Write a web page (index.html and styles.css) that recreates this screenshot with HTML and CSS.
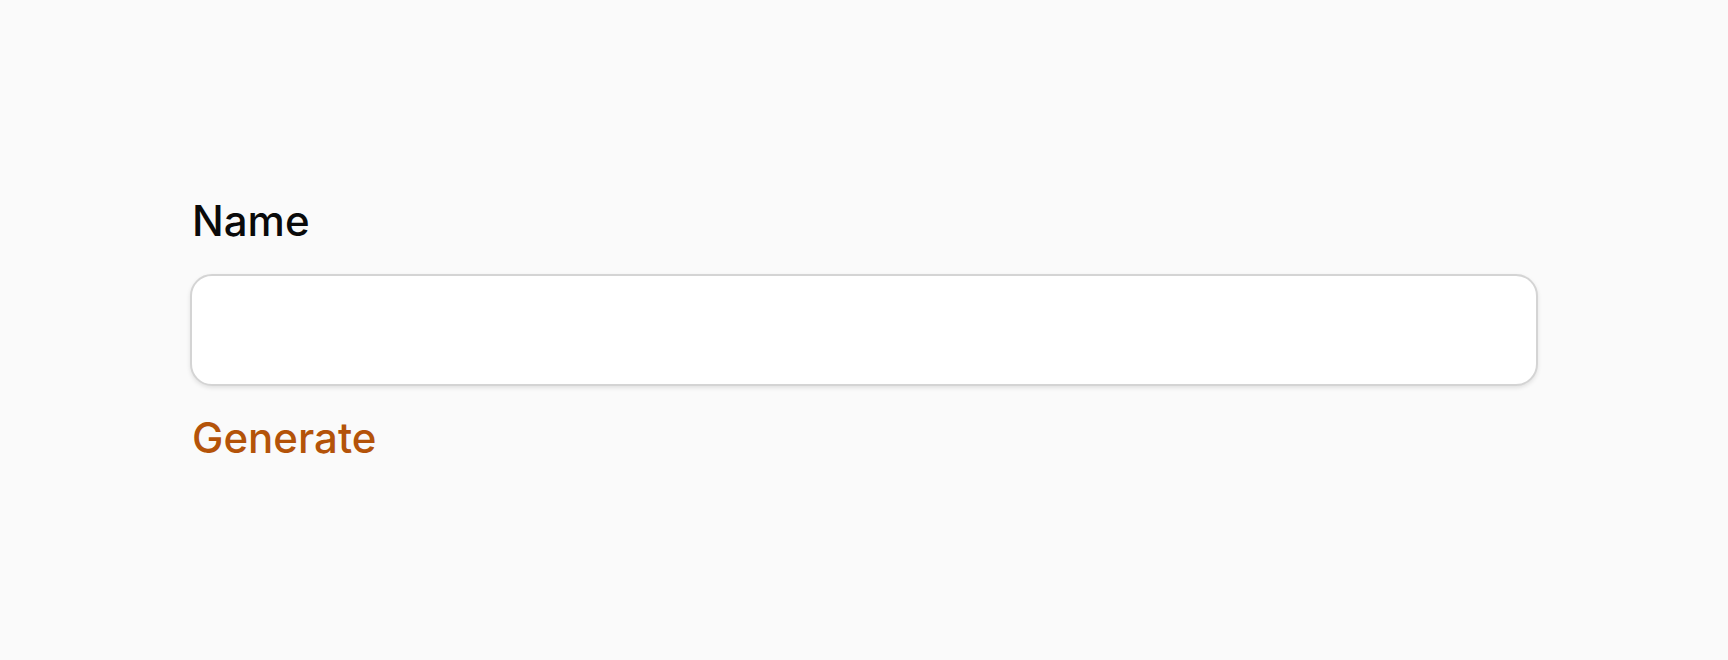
FILE: index.html
```html
<!DOCTYPE html>
<html lang="en">
<head>
<meta charset="utf-8">
<title>Name</title>
<link rel="stylesheet" href="styles.css">
</head>
<body>
<main class="page">
  <form class="form">
    <label class="label" for="name">Name</label>
    <input class="input" id="name" type="text">
    <button class="generate" type="button">Generate</button>
  </form>
</main>
</body>
</html>
```
FILE: styles.css
```css
html, body {
  margin: 0;
  padding: 0;
  background: #fafafa;
}
body {
  font-family: Inter, "Noto Sans", sans-serif;
  color: #0a0a0a;
}
.page {
  padding: 197px 190px 0 190px;
}
.form {
  display: flex;
  flex-direction: column;
  align-items: flex-start;
}
.label {
  font-size: 42px;
  font-weight: 500;
  line-height: 48px;
  margin-left: 2px;
  margin-bottom: 29px;
}
.input {
  box-sizing: border-box;
  width: 100%;
  height: 112px;
  margin: 0;
  border: 2px solid #d4d4d4;
  border-radius: 22px;
  background: #ffffff;
  box-shadow: 0 2px 4px rgba(0, 0, 0, 0.1);
  font: inherit;
  font-size: 40px;
  padding: 0 24px;
  outline: none;
}
.generate {
  margin: 28px 0 0 2px;
  padding: 0;
  border: 0;
  background: none;
  font-family: inherit;
  font-size: 42px;
  font-weight: 500;
  line-height: 48px;
  color: #b45309;
  cursor: pointer;
}
```
